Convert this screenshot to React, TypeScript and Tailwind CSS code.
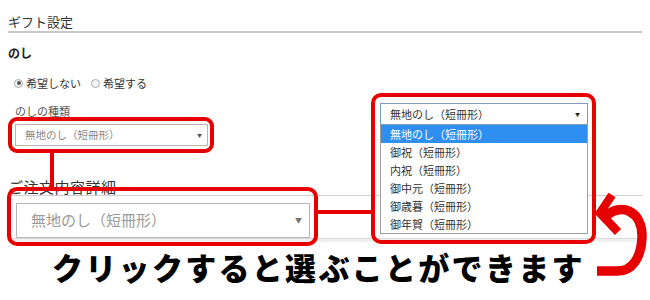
import React from "react";

const FONT = "[font-family:'Noto_Sans_CJK_JP','Noto_Sans',sans-serif]";

function Radio({ checked }: { checked?: boolean }) {
  return (
    <span className="inline-flex w-[9px] h-[9px] rounded-full border border-[#aaa] bg-[#f4f4f4] items-center justify-center">
      {checked && <span className="w-[4px] h-[4px] rounded-full bg-[#555]" />}
    </span>
  );
}

const options = [
  "無地のし（短冊形）",
  "御祝（短冊形）",
  "内祝（短冊形）",
  "御中元（短冊形）",
  "御歳暮（短冊形）",
  "御年賀（短冊形）",
];

export default function App() {
  return (
    <div className={`relative w-[650px] h-[300px] bg-white overflow-hidden text-[#333] ${FONT}`}>
      {/* base page */}
      <div className="pl-2 pt-[13px] flex flex-col">
        <div className="w-[634px] border-b-2 border-[#c8c8c8] text-[13px] leading-[18px]">ギフト設定</div>
        <div className="mt-[12px] text-[12px] leading-[16px] font-bold text-[#222]">のし</div>
        <div className="mt-[14px] flex items-center text-[11px] leading-[16px] pl-[6px] gap-[3px]">
          <Radio checked />
          <span className="mr-[7px]">希望しない</span>
          <Radio />
          <span>希望する</span>
        </div>
        <div className="mt-[12px] pl-[7px] text-[11px] leading-[16px] text-[#555]">のしの種類</div>
        <div className="mt-[5px] ml-[7px] w-[193px] h-[22px] border border-[#b5b5b5] bg-white flex items-center justify-between pl-[9px] pr-[5px] text-[10.5px] text-[#888]">
          <span>無地のし（短冊形）</span>
          <span className="text-[5px] text-[#555]">▼</span>
        </div>
        <div className="mt-[32px] w-[634px] border-b border-[#cfcfcf] text-[15px] leading-[17px] tracking-[0.5px]">ご注文内容詳細</div>
        <div className="mt-[7px] ml-[8px] w-[294px] h-[35px] border border-[#b5b5b5] bg-white flex items-center justify-between pl-[14px] pr-[7px] text-[15px] text-[#9a9a9a]">
          <span>無地のし（短冊形）</span>
          <span className="text-[7px] text-[#777]">▼</span>
        </div>
        <div className="w-[634px] h-[4px] bg-[#f0f0f0] border-t border-[#dadada]" />
        <div className="mt-[7px] ml-[44px] text-[31px] leading-[36px] font-black tracking-[2.3px] text-black">
          クリックすると選ぶことができます
        </div>
      </div>

      {/* dropdown overlay */}
      <div className="absolute left-[380px] top-[103px] w-[208px] flex flex-col">
        <div className="h-[22px] border border-[#7f9db9] bg-white flex items-center justify-between pl-[9px] pr-[7px] text-[11px] text-[#333]">
          <span>無地のし（短冊形）</span>
          <span className="text-[5px] text-[#222]">▼</span>
        </div>
        <div className="border border-t-0 border-[#a0a0a0] bg-white flex flex-col text-[11px]">
          {options.map((o, i) => (
            <div
              key={o}
              className={`h-[18px] leading-[18px] pl-[9px] ${i === 0 ? "bg-[#2e8ff0] text-white" : "text-[#333]"}`}
            >
              {o}
            </div>
          ))}
        </div>
      </div>

      {/* red annotation boxes */}
      <div className="absolute left-[8px] top-[117px] w-[206px] h-[36px] border-[4px] border-[#e60000] rounded-[9px]" />
      <div className="absolute left-[50px] top-[152px] w-[4px] h-[37px] bg-[#e60000]" />
      <div className="absolute left-[7px] top-[187px] w-[311px] h-[59px] border-[4px] border-[#e60000] rounded-[10px]" />
      <div className="absolute left-[317px] top-[210px] w-[56px] h-[4px] bg-[#e60000]" />
      <div className="absolute left-[371px] top-[93px] w-[225px] h-[151px] border-[4px] border-[#e60000] rounded-[10px]" />

      {/* curved arrow */}
      <svg className="absolute left-[592px] top-[190px]" width="58" height="100" viewBox="0 0 58 100">
        <path
          d="M13 27 C 28 12, 51 20, 50 48 C 49 68, 40 81, 26 81 L 5 81"
          fill="none"
          stroke="#e60000"
          strokeWidth="9.5"
        />
        <path d="M20 5 L 8 23 L 26 42" fill="none" stroke="#e60000" strokeWidth="8.5" strokeLinejoin="miter" />
      </svg>
    </div>
  );
}
